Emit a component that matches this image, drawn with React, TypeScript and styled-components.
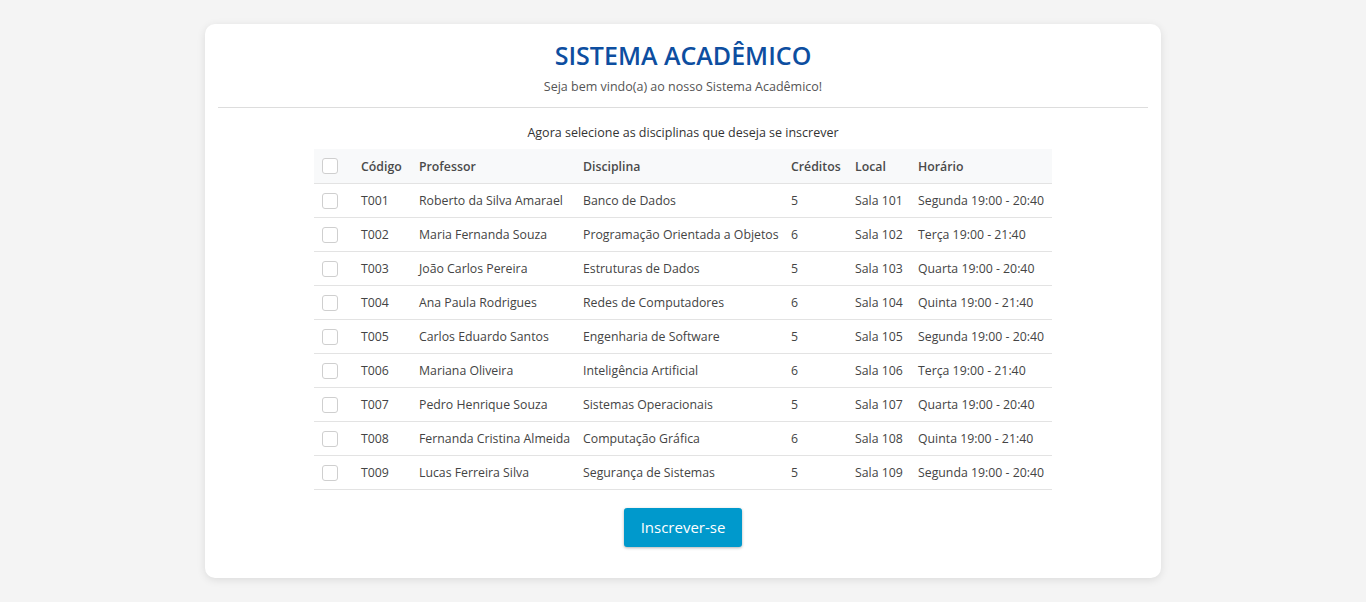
import React from "react";
import styled, { createGlobalStyle } from "styled-components";

const Global = createGlobalStyle`
  html, body { margin: 0; padding: 0; background: #f4f4f4; }
  body { font-family: "Open Sans", "Noto Sans", sans-serif; color: #333; }
`;

const Page = styled.div`
  padding: 24px 0;
  display: flex;
  justify-content: center;
`;

const Card = styled.div`
  width: 956px;
  box-sizing: border-box;
  background: #fff;
  border-radius: 10px;
  box-shadow: 0 2px 8px rgba(0, 0, 0, 0.1);
  padding: 14px 13px 31px;
  display: flex;
  flex-direction: column;
  align-items: center;
`;

const Title = styled.h1`
  margin: 0;
  font-size: 25px;
  font-weight: 600;
  color: #0d4ea0;
  line-height: 34px;
`;

const Subtitle = styled.p`
  margin: 6px 0 0;
  font-size: 12.5px;
  color: #555;
  line-height: 18px;
`;

const Divider = styled.hr`
  align-self: stretch;
  border: none;
  border-top: 1px solid #ddd;
  margin: 11px 0 0;
`;

const Intro = styled.p`
  margin: 16px 0 0;
  font-size: 12.5px;
  color: #333;
  line-height: 18px;
`;

const Table = styled.table`
  margin-top: 7px;
  width: 738px;
  border-collapse: collapse;
  table-layout: fixed;
  font-size: 12.3px;
`;

const HeadRow = styled.tr`
  background: #f8f9fa;
`;

const Th = styled.th<{ $w: number }>`
  width: ${(p) => p.$w}px;
  height: 34px;
  padding: 1px 8px 0;
  box-sizing: border-box;
  text-align: left;
  font-weight: 600;
  color: #4a4a4a;
  border-bottom: 1px solid #e3e3e3;
  white-space: nowrap;
`;

const Td = styled.td`
  height: 34px;
  padding: 1px 8px 0;
  box-sizing: border-box;
  color: #444;
  border-bottom: 1px solid #e3e3e3;
  white-space: nowrap;
  overflow: hidden;
`;

const Box = styled.span`
  display: block;
  width: 16px;
  height: 16px;
  box-sizing: border-box;
  border: 1px solid #cfcfcf;
  border-radius: 3px;
  background: #fff;
`;

const Button = styled.button`
  margin-top: 18px;
  width: 118px;
  height: 39px;
  border: none;
  border-radius: 3px;
  background: #0099cc;
  color: #fff;
  font-family: "Open Sans", sans-serif;
  font-size: 15px;
  box-shadow: 0 1px 3px rgba(0, 0, 0, 0.3);
  cursor: pointer;
`;

const rows = [
  ["T001", "Roberto da Silva Amarael", "Banco de Dados", "5", "Sala 101", "Segunda 19:00 - 20:40"],
  ["T002", "Maria Fernanda Souza", "Programação Orientada a Objetos", "6", "Sala 102", "Terça 19:00 - 21:40"],
  ["T003", "João Carlos Pereira", "Estruturas de Dados", "5", "Sala 103", "Quarta 19:00 - 20:40"],
  ["T004", "Ana Paula Rodrigues", "Redes de Computadores", "6", "Sala 104", "Quinta 19:00 - 21:40"],
  ["T005", "Carlos Eduardo Santos", "Engenharia de Software", "5", "Sala 105", "Segunda 19:00 - 20:40"],
  ["T006", "Mariana Oliveira", "Inteligência Artificial", "6", "Sala 106", "Terça 19:00 - 21:40"],
  ["T007", "Pedro Henrique Souza", "Sistemas Operacionais", "5", "Sala 107", "Quarta 19:00 - 20:40"],
  ["T008", "Fernanda Cristina Almeida", "Computação Gráfica", "6", "Sala 108", "Quinta 19:00 - 21:40"],
  ["T009", "Lucas Ferreira Silva", "Segurança de Sistemas", "5", "Sala 109", "Segunda 19:00 - 20:40"],
];

const cols: [string, number][] = [
  ["", 39],
  ["Código", 58],
  ["Professor", 164],
  ["Disciplina", 208],
  ["Créditos", 64],
  ["Local", 63],
  ["Horário", 142],
];

export default function App() {
  return (
    <>
      <Global />
      <Page>
        <Card>
          <Title>SISTEMA ACADÊMICO</Title>
          <Subtitle>Seja bem vindo(a) ao nosso Sistema Acadêmico!</Subtitle>
          <Divider />
          <Intro>Agora selecione as disciplinas que deseja se inscrever</Intro>
          <Table>
            <thead>
              <HeadRow>
                {cols.map(([label, w], i) => (
                  <Th key={i} $w={w}>
                    {i === 0 ? <Box /> : label}
                  </Th>
                ))}
              </HeadRow>
            </thead>
            <tbody>
              {rows.map((r) => (
                <tr key={r[0]}>
                  <Td>
                    <Box />
                  </Td>
                  {r.map((c, j) => (
                    <Td key={j}>{c}</Td>
                  ))}
                </tr>
              ))}
            </tbody>
          </Table>
          <Button>Inscrever-se</Button>
        </Card>
      </Page>
    </>
  );
}
